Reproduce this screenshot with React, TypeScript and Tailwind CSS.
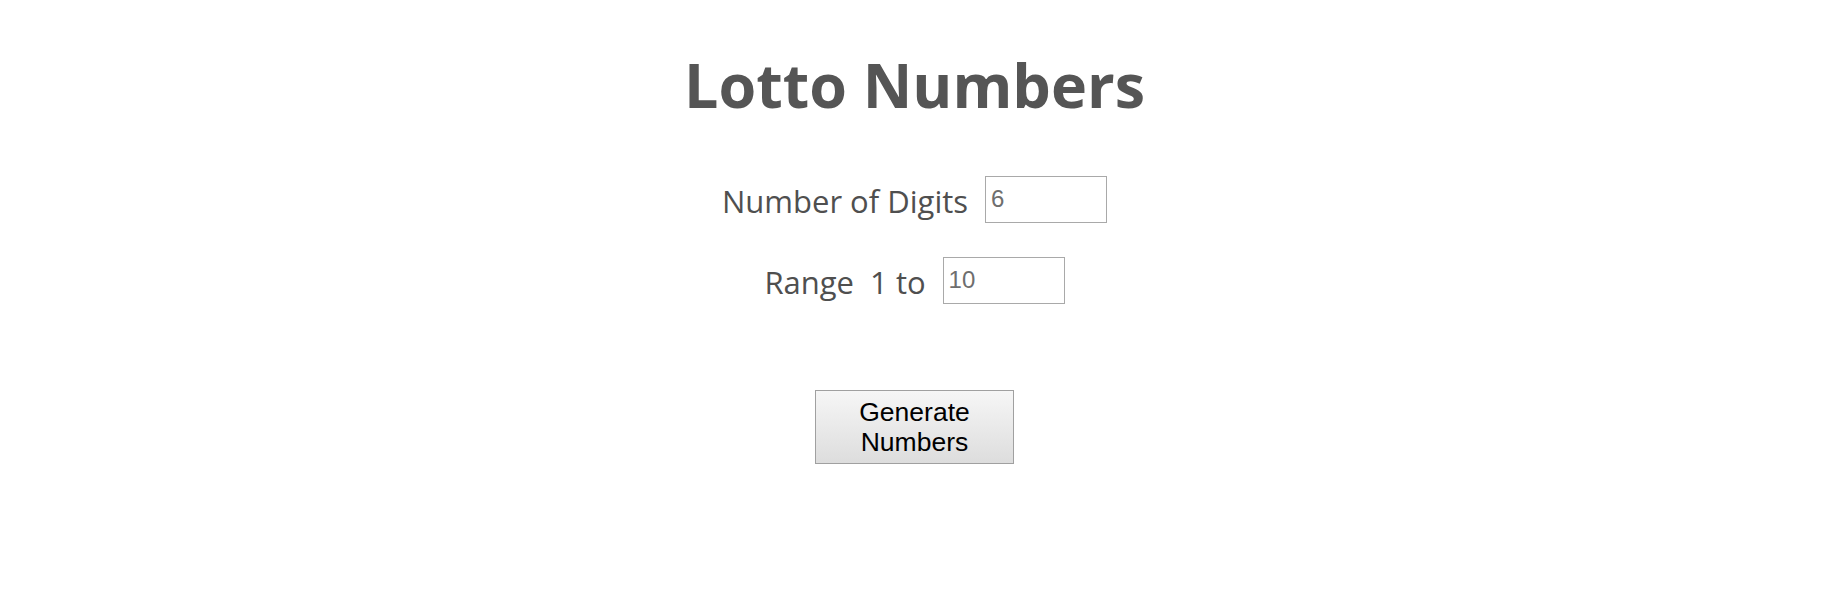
import { useState } from "react";

export default function App() {
  const [digits, setDigits] = useState("6");
  const [range, setRange] = useState("10");

  return (
    <main className="min-h-screen bg-white flex flex-col items-center pt-[54px] font-['Open_Sans',sans-serif]">
      <h1 className="text-[61px] leading-none font-bold text-[#555555]">Lotto Numbers</h1>

      <div className="mt-[61px] flex flex-col items-center gap-[34px]">
        <div className="flex items-center gap-[17px]">
          <label className="text-[31px] leading-none text-[#4f4f4f] pt-[3px]">Number of Digits</label>
          <input
            value={digits}
            onChange={(e) => setDigits(e.target.value)}
            className="w-[122px] h-[47px] border border-[#a9a9a9] px-[5px] pb-[2px] text-[24px] text-[#6e6e6e] font-['Liberation_Sans',Arial,sans-serif] outline-none"
          />
        </div>
        <div className="flex items-center gap-[17px]">
          <label className="text-[31px] leading-none text-[#4f4f4f] pt-[3px] whitespace-pre">Range  1 to</label>
          <input
            value={range}
            onChange={(e) => setRange(e.target.value)}
            className="w-[122px] h-[47px] border border-[#a9a9a9] px-[5px] pb-[2px] text-[24px] text-[#6e6e6e] font-['Liberation_Sans',Arial,sans-serif] outline-none"
          />
        </div>
      </div>

      <button className="mt-[86px] w-[199px] h-[74px] border border-[#a0a0a0] bg-gradient-to-b from-[#f6f6f6] to-[#dddddd] text-[26.5px] leading-[30px] text-black font-['Liberation_Sans',Arial,sans-serif]">
        Generate
        <br />
        Numbers
      </button>
    </main>
  );
}
